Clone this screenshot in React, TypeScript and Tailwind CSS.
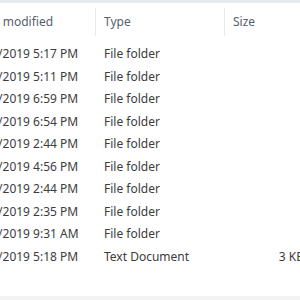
const rows = [
  ["9/16/2019 5:17 PM", "File folder", ""],
  ["9/16/2019 5:11 PM", "File folder", ""],
  ["9/16/2019 6:59 PM", "File folder", ""],
  ["9/16/2019 6:54 PM", "File folder", ""],
  ["9/16/2019 2:44 PM", "File folder", ""],
  ["9/16/2019 4:56 PM", "File folder", ""],
  ["9/16/2019 2:44 PM", "File folder", ""],
  ["9/16/2019 2:35 PM", "File folder", ""],
  ["9/16/2019 9:31 AM", "File folder", ""],
  ["9/16/2019 5:18 PM", "Text Document", "3 KB"],
];

export default function App() {
  return (
    <div className="w-[300px] h-[300px] overflow-hidden bg-white flex flex-col font-['Noto_Sans','Open_Sans',sans-serif] text-[12px]">
      <div className="h-[3px] bg-[#e6eaee] shrink-0" />
      <div className="flex h-[40px] items-start pt-[5px] shrink-0 ml-[-31px] text-[#56606a]">
        <div className="w-[127px] shrink-0 pl-[4px] h-[28px] flex items-center border-r border-[#e8e8e8] whitespace-nowrap">Date modified</div>
        <div className="w-[129px] shrink-0 pl-[8px] h-[28px] flex items-center border-r border-[#e8e8e8]">Type</div>
        <div className="w-[90px] shrink-0 pl-[8px] h-[28px] flex items-center">Size</div>
      </div>
      <div className="flex flex-col ml-[-31px] text-[#3c3c3c]">
        {rows.map(([d, t, s], i) => (
          <div key={i} className="flex h-[22.5px] items-center shrink-0">
            <div className="w-[127px] shrink-0 pl-[4px] whitespace-nowrap">{d}</div>
            <div className="w-[129px] shrink-0 pl-[8px] whitespace-nowrap">{t}</div>
            <div className="w-[83px] shrink-0 pr-[4px] text-right whitespace-nowrap">{s}</div>
          </div>
        ))}
      </div>
      <div className="flex-1" />
      <div className="h-[4px] bg-[#f3f3f3] shrink-0" />
    </div>
  );
}
